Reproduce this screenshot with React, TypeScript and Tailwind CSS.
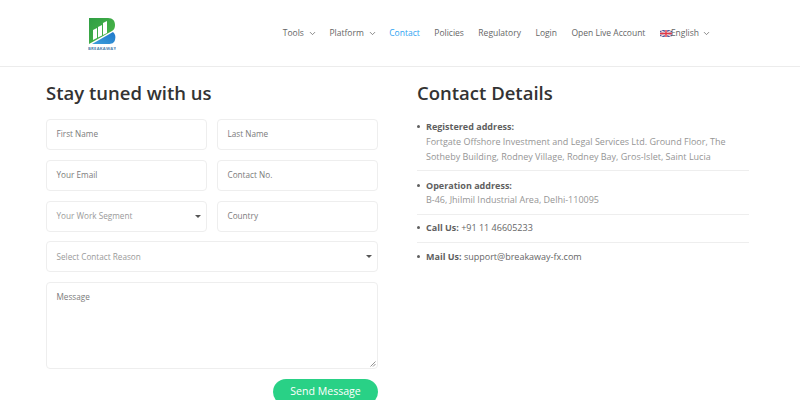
import { ChevronDown } from "lucide-react";

const navItems = [
  { label: "Tools", caret: true },
  { label: "Platform", caret: true },
  { label: "Contact", active: true },
  { label: "Policies" },
  { label: "Regulatory" },
  { label: "Login" },
  { label: "Open Live Account" },
];

const Logo = () => (
  <svg width="28" height="34" viewBox="0 0 28 34" className="block">
    <defs>
      <linearGradient id="logo-green" x1="0" y1="0" x2="1" y2="1">
        <stop offset="0" stopColor="#2f9e44" />
        <stop offset="1" stopColor="#4fb848" />
      </linearGradient>
      <linearGradient id="logo-blue" x1="0" y1="1" x2="1" y2="0">
        <stop offset="0" stopColor="#3c9fdc" />
        <stop offset="1" stopColor="#1f77c9" />
      </linearGradient>
    </defs>
    <path d="M1 1H20C25 1 27 4 27 8C27 11 26 13 24 14L1 27Z" fill="url(#logo-green)" />
    <path d="M5 13L9 11V21L5 23Z M10 10L14 8V18.500L10 20.500Z M15 6L19 4V16L15 18Z" fill="#ffffff" />
    <path d="M25 15C27 17 28 19 27 23C26 26 24 27 20 27H4Z" fill="url(#logo-blue)" />
    <text x="0" y="32.500" fontSize="4.200" fontWeight="700" fill="#4a7fae" fontFamily="'Open Sans', sans-serif" textLength="28">BREAKAWAY</text>
  </svg>
);

const Flag = () => (
  <svg width="12" height="7" viewBox="0 0 14 8" className="mr-[-1px] block">
    <rect width="14" height="8" fill="#3f4f9e" />
    <path d="M0 0L14 8M14 0L0 8" stroke="#f4dede" strokeWidth="1.600" />
    <path d="M7 0V8M0 4H14" stroke="#f4dede" strokeWidth="3" />
    <path d="M7 0V8M0 4H14" stroke="#e0394a" strokeWidth="1.600" />
  </svg>
);

const Caret = () => (
  <svg width="6" height="3" viewBox="0 0 6 3" className="block">
    <path d="M0 0H6L3 3Z" fill="#555555" />
  </svg>
);

const Field = ({ label, select, light }: { label: string; select?: boolean; light?: boolean }) => (
  <div className="flex h-[31px] items-center justify-between rounded-[4px] border-[1.5px] border-[#eeeeee] bg-white pl-[9.500px] pr-[5px] text-[8.2px] text-[#7b7b7b]">
    <span className={light ? "text-[#9a9a9a]" : ""}>{label}</span>
    {select && <Caret />}
  </div>
);

export default function App() {
  return (
    <div className="h-[400px] w-[800px] overflow-hidden bg-white font-['Open_Sans',sans-serif]">
      <header className="flex h-[67px] items-start justify-between border-b border-[#ececec] pl-[88px] pr-[89px]">
        <div className="pt-[17px]">
          <Logo />
        </div>
        <nav className="flex items-center gap-[14.500px] pt-[24px] text-[8.5px] font-medium leading-[18px] text-[#666666]">
          {navItems.map((item) => (
            <div key={item.label} className="flex items-center">
              <span className={item.active ? "text-[#2ea3f2]" : ""}>{item.label}</span>
              {item.caret && <ChevronDown size={9} strokeWidth={2} className="ml-[4px] mr-[-2px]" />}
            </div>
          ))}
          <div className="flex items-center">
            <Flag />
            <span>English</span>
            <ChevronDown size={9} strokeWidth={2} className="ml-[3px]" />
          </div>
        </nav>
      </header>

      <main className="flex pl-[46px] pt-[11px]">
        <section className="w-[332px]">
          <h2 className="text-[18.5px] font-semibold leading-[30px] text-[#333333]">Stay tuned with us</h2>
          <form className="mt-[11px] flex flex-col gap-[9.750px]">
            <div className="grid grid-cols-2 gap-x-[10px] gap-y-[9.750px]">
              <Field label="First Name" />
              <Field label="Last Name" />
              <Field label="Your Email" />
              <Field label="Contact No." />
              <Field label="Your Work Segment" select light />
              <Field label="Country" />
            </div>
            <Field label="Select Contact Reason" select light />
            <div className="relative h-[87px] rounded-[4px] border-[1.5px] border-[#eeeeee] px-[9.500px] py-[7px] text-[8.2px] leading-[14px] text-[#7b7b7b]">
              Message
              <svg width="6" height="6" viewBox="0 0 6 6" className="absolute bottom-[1px] right-[1px]">
                <path d="M0.500 5.500L5.500 0.500M3 5.500L5.500 3" stroke="#777777" strokeWidth="0.800" />
              </svg>
            </div>
            <div className="flex justify-end">
              <button type="button" className="h-[26px] w-[105px] rounded-full bg-[#29d186] text-[10.600px] font-medium text-white">
                Send Message
              </button>
            </div>
          </form>
        </section>

        <section className="ml-[39px] w-[332px]">
          <h2 className="text-[18.5px] font-semibold leading-[30px] text-[#333333]">Contact Details</h2>
          <ul className="mt-[11px] text-[9px] leading-[15px] text-[#666666]">
            <li className="border-b border-[#eeeeee] pb-[6px] pl-[9px]">
              <div className="relative">
                <span className="absolute left-[-9px] top-[6px] size-[3px] rounded-full bg-[#5f5f5f]" />
                <strong className="font-bold text-[#5f5f5f]">Registered address:</strong>
              </div>
              <p className="text-[#959595]">Fortgate Offshore Investment and Legal Services Ltd. Ground Floor, The Sotheby Building, Rodney Village, Rodney Bay, Gros-Islet, Saint Lucia</p>
            </li>
            <li className="border-b border-[#eeeeee] pb-[7px] pl-[9px] pt-[7px]">
              <div className="relative">
                <span className="absolute left-[-9px] top-[6px] size-[3px] rounded-full bg-[#5f5f5f]" />
                <strong className="font-bold text-[#5f5f5f]">Operation address:</strong>
              </div>
              <p className="leading-[14px] text-[#959595]">B-46, Jhilmil Industrial Area, Delhi-110095</p>
            </li>
            <li className="relative border-b border-[#eeeeee] pb-[7px] pl-[9px] pt-[5px]">
              <span className="absolute left-0 top-[11px] size-[3px] rounded-full bg-[#5f5f5f]" />
              <strong className="font-bold text-[#5f5f5f]">Call Us:</strong> +91 11 46605233
            </li>
            <li className="relative pl-[9px] pt-[6px]">
              <span className="absolute left-0 top-[12px] size-[3px] rounded-full bg-[#5f5f5f]" />
              <strong className="font-bold text-[#5f5f5f]">Mail Us:</strong> support@breakaway-fx.com
            </li>
          </ul>
        </section>
      </main>
    </div>
  );
}
